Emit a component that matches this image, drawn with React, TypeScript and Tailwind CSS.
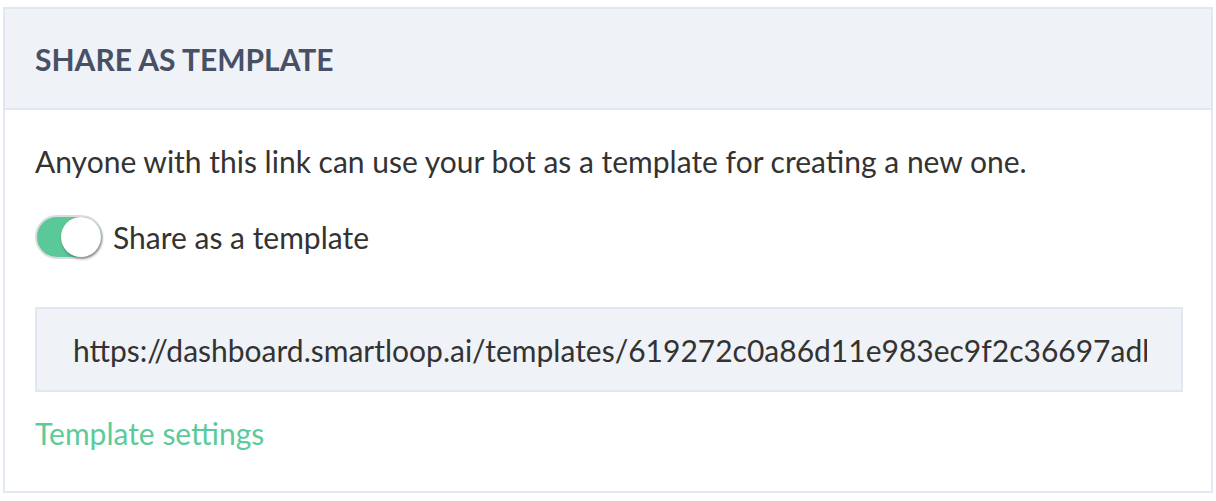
import React, { useState } from 'react'

const TEMPLATE_URL = 'https://dashboard.smartloop.ai/templates/619272c0a86d11e983ec9f2c36697adb'

const Toggle: React.FC<{ on: boolean; onChange: () => void }> = ({ on, onChange }) => (
  <button
    onClick={onChange}
    className={`relative h-[44px] w-[68px] shrink-0 rounded-full border-2 border-[#dcdcdc] ${on ? 'bg-[#5bc89a]' : 'bg-[#e6e6e6]'}`}
    aria-label="Share as a template"
  >
    <span
      className={`absolute top-[0px] h-[40px] w-[40px] rounded-full bg-white shadow-[1px_2px_3px_rgba(0,0,0,0.35)] ${on ? 'left-[24px]' : 'left-[0px]'}`}
    />
  </button>
)

const App: React.FC = () => {
  const [shared, setShared] = useState(true)

  return (
    <div className="bg-white px-[3px] pt-[7px] font-['Lato','Open_Sans',sans-serif]">
      <div className="border-2 border-[#e1e8f3] bg-white">
        {/* Header */}
        <div className="flex h-[101px] items-center border-b-2 border-[#e1e8f3] bg-[#eff2f7] px-[30px]">
          <h2 className="text-[30px] leading-[36px] font-bold text-[#475064]">SHARE AS TEMPLATE</h2>
        </div>

        {/* Body */}
        <div className="pl-[30px] pr-[28px] pt-[33px] pb-[40px] text-[#333333]">
          <p className="text-[30px] leading-[36px]">
            Anyone with this link can use your bot as a template for creating a new one.
          </p>

          <div className="mt-[36px] flex items-center gap-[10px]">
            <Toggle on={shared} onChange={() => setShared(!shared)} />
            <span className="text-[30px] leading-[36px]">Share as a template</span>
          </div>

          <input
            readOnly
            value={TEMPLATE_URL}
            className="mt-[48px] block h-[85px] w-full border-2 border-[#e1e8f3] bg-[#eff2f7] pl-[36px] pr-[34px] text-[30px] text-[#333333] outline-none"
          />

          <a href="#" className="mt-[23px] inline-block text-[30px] leading-[36px] text-[#5ccb9a]">
            Template settings
          </a>
        </div>
      </div>
    </div>
  )
}

export default App
